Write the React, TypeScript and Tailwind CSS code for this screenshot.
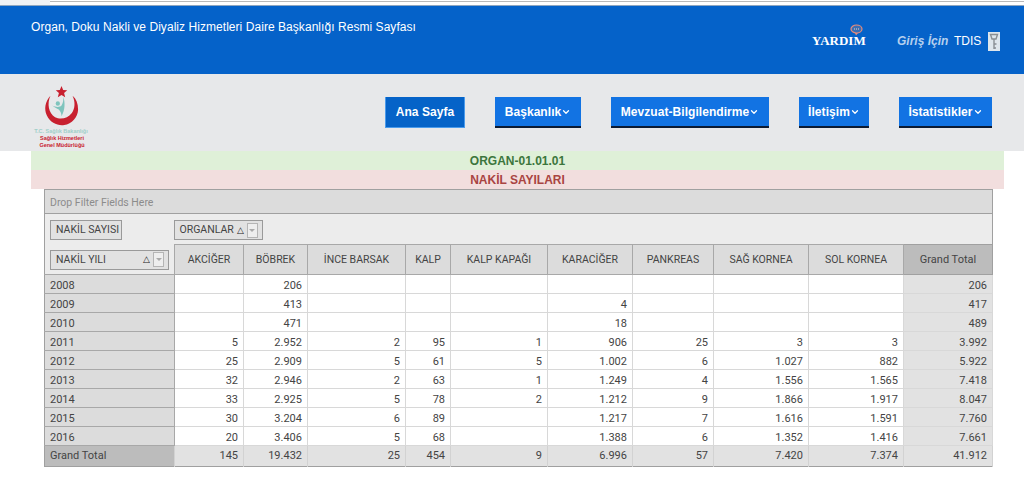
import { ChevronDown } from 'lucide-react';

const columns = [
  { name: 'AKCİĞER', width: 'w-[69px]' },
  { name: 'BÖBREK', width: 'w-[64px]' },
  { name: 'İNCE BARSAK', width: 'w-[98px]' },
  { name: 'KALP', width: 'w-[45px]' },
  { name: 'KALP KAPAĞI', width: 'w-[97px]' },
  { name: 'KARACİĞER', width: 'w-[85px]' },
  { name: 'PANKREAS', width: 'w-[81px]' },
  { name: 'SAĞ KORNEA', width: 'w-[95px]' },
  { name: 'SOL KORNEA', width: 'w-[95px]' },
];

const rows = [
  ['2008', '', '206', '', '', '', '', '', '', '', '206'],
  ['2009', '', '413', '', '', '', '4', '', '', '', '417'],
  ['2010', '', '471', '', '', '', '18', '', '', '', '489'],
  ['2011', '5', '2.952', '2', '95', '1', '906', '25', '3', '3', '3.992'],
  ['2012', '25', '2.909', '5', '61', '5', '1.002', '6', '1.027', '882', '5.922'],
  ['2013', '32', '2.946', '2', '63', '1', '1.249', '4', '1.556', '1.565', '7.418'],
  ['2014', '33', '2.925', '5', '78', '2', '1.212', '9', '1.866', '1.917', '8.047'],
  ['2015', '30', '3.204', '6', '89', '', '1.217', '7', '1.616', '1.591', '7.760'],
  ['2016', '20', '3.406', '5', '68', '', '1.388', '6', '1.352', '1.416', '7.661'],
];

const totals = ['145', '19.432', '25', '454', '9', '6.996', '57', '7.420', '7.374', '41.912'];

function NavButton({ label, width, active, menu }: { label: string; width: string; active?: boolean; menu?: boolean }) {
  return (
    <button
      className={`h-[31px] flex items-center justify-center text-white text-[12px] tracking-[0.06px] font-bold ${width} ${
        active
          ? 'bg-[#0563c8] border border-t-0 border-[#4a9bec]'
          : 'bg-[#1273e3] border-b-2 border-[#0b1a33]'
      }`}
    >
      {label}
      {menu && <ChevronDown size={10} strokeWidth={3} />}
    </button>
  );
}

function FieldButton({ label, arrow, wide }: { label: string; arrow?: boolean; wide?: boolean }) {
  return (
    <div
      className={`h-[20px] inline-flex items-center border border-[#9a9a9a] bg-[#e2e2e2] pl-[5px] text-[#444] text-[10.5px] ${
        arrow ? 'pr-[4px]' : 'pr-[2px]'
      } ${wide ? 'w-[119px] justify-between' : 'gap-[3px]'}`}
    >
      <span>{label}</span>
      {arrow && (
        <span className="flex items-center gap-[3px]">
          <span className="text-[9px] leading-none text-[#222]">△</span>
          <span className="w-[11px] h-[15px] border border-[#b5b5b5] bg-[#eeeeee] flex items-center justify-center">
            <span className="w-0 h-0 border-x-[3px] border-x-transparent border-t-[3px] border-t-[#aaaaaa]" />
          </span>
        </span>
      )}
    </div>
  );
}

export default function App() {
  return (
    <div className="w-[1024px] h-[490px] overflow-hidden bg-white font-['Liberation_Sans',sans-serif]">
      <div className="h-[6px] flex bg-white border-b border-[#8fa6bf]">
        <div className="w-[50px] bg-[#f0f2f5]" />
        <div className="flex-1 h-[2px] border-b border-[#b9b9b9]" />
      </div>

      {/* Blue header */}
      <div className="h-[68px] bg-[#0562c9] flex justify-between pl-[31px] pr-[24px] text-white">
        <div className="pt-[13px] text-[12px] leading-[16px] tracking-[0.05px]">
          Organ, Doku Nakli ve Diyaliz Hizmetleri Daire Başkanlığı Resmi Sayfası
        </div>
        <div className="flex items-start pt-[18px]">
          <div className="relative w-[53px] mr-[32px] pt-[10px]">
            <svg className="absolute left-[38px] top-[0px]" width="13" height="12" viewBox="0 0 13 12" fill="none">
              <ellipse cx="6.5" cy="5" rx="5.5" ry="4" fill="#3a6fb5" stroke="#e98c7c" strokeWidth="1.2" />
              <path d="M5 9l1 2.5L8 9" fill="#e98c7c" />
              <path d="M4 5h5" stroke="#f3d6c6" strokeWidth="1.2" strokeDasharray="1 1" />
            </svg>
            <div className="text-[13px] leading-[14px] font-bold font-['Liberation_Serif',serif] whitespace-nowrap">YARDIM</div>
          </div>
          <div className="pt-[9px] text-[12px] leading-[16px] italic font-bold text-[#b5d0ee] w-[57px] whitespace-nowrap">Giriş İçin</div>
          <div className="pt-[9px] text-[12px] leading-[16px] w-[34px]">TDIS</div>
          <div className="mt-[8px] w-[12px] h-[19px] bg-[#dfe6ec] flex items-center justify-center">
            <svg width="10" height="18" viewBox="0 0 10 18" fill="none" stroke="#8a8f94" strokeWidth="1.4">
              <path d="M1.5 1.5L8.5 1.5L7 6L3 6Z" />
              <path d="M5 6V16M5 11h2.5M5 15h2" />
            </svg>
          </div>
        </div>
      </div>

      {/* Logo and navigation */}
      <div className="h-[77px] bg-[#e7e8ea] flex pl-[34px] pr-[32px] justify-between">
        <div className="w-[54px] flex flex-col items-center pt-[12px] shrink-0">
          <svg width="35" height="41" viewBox="0 0 38 42" preserveAspectRatio="none">
            <polygon
              fill="#c8202f"
              points="19,0 20.8,4.2 25.2,4.4 21.8,7.2 23,11.6 19,9.2 15,11.6 16.2,7.2 12.8,4.4 17.2,4.2"
            />
            <path
              d="M7 10C1 16 0 24 3 30C7 38 15 41 22 40C30 39 37 32 37 24C37 18 35 13 31 10C34 16 34 23 30 28C26 33 18 35 12 32C5 28 3 18 7 10Z"
              fill="#c8202f"
            />
            <circle cx="15" cy="18" r="2.3" fill="#7fc4bd" />
            <path d="M9 20C13 22 17 22 19 20C21 17 21 14 21 11C23 17 23 24 19 31C19 28 18 26 16 24C14 23 11 22 9 20Z" fill="#7fc4bd" />
          </svg>
          <div className="w-[70px] text-center text-[5.5px] leading-[7px] font-bold whitespace-nowrap mt-[1px]">
            <div className="text-[#9fcfc9]">T.C. Sağlık Bakanlığı</div>
            <div className="text-[#c8202f] pl-[2px]">Sağlık Hizmetleri</div>
            <div className="text-[#c8202f] pl-[2px]">Genel Müdürlüğü</div>
          </div>
        </div>
        <div className="flex gap-[30px] pt-[23px] items-start">
          <NavButton label="Ana Sayfa" width="w-[80px]" active />
          <NavButton label="Başkanlık" width="w-[86px]" menu />
          <NavButton label="Mevzuat-Bilgilendirme" width="w-[158px]" menu />
          <NavButton label="İletişim" width="w-[70px]" menu />
          <NavButton label="İstatistikler" width="w-[93px]" menu />
        </div>
      </div>

      {/* Titles */}
      <div className="mx-[31px] w-[973px] h-[19px] bg-[#dff0d8] text-[#3c763d] text-[12px] leading-[21px] font-bold text-center">
        ORGAN-01.01.01
      </div>
      <div className="mx-[31px] w-[973px] h-[19px] bg-[#f2dede] text-[#a94442] text-[12px] leading-[21px] font-bold text-center">
        NAKİL SAYILARI
      </div>

      {/* Pivot grid */}
      <table className="ml-[44px] w-[949px] table-fixed border-collapse border border-[#a0a0a0] text-[11px] text-[#444] font-['Roboto',sans-serif]">
        <colgroup>
          <col className="w-[130px]" />
          {columns.map((c) => (
            <col key={c.name} className={c.width} />
          ))}
          <col />
        </colgroup>
        <tbody>
          <tr className="h-[24px] bg-[#dcdcdc] border-b border-[#a0a0a0]">
            <td colSpan={11} className="px-[5px] pt-[2px] text-[10.5px] text-[#8c8c8c]">Drop Filter Fields Here</td>
          </tr>
          <tr className="h-[31px] bg-[#ececec]">
            <td className="px-[5px] pt-[2px]">
              <FieldButton label="NAKİL SAYISI" />
            </td>
            <td colSpan={10} className="pt-[2px] pl-0 -translate-x-px">
              <FieldButton label="ORGANLAR" arrow />
            </td>
          </tr>
          <tr className="h-[30px]">
            <td className="bg-[#ececec] px-[5px] pt-[1px]">
              <FieldButton label="NAKİL YILI" arrow wide />
            </td>
            {columns.map((c) => (
              <td key={c.name} className="bg-[#dcdcdc] border border-[#a8a8a8] text-center text-[10.5px] whitespace-nowrap">
                {c.name}
              </td>
            ))}
            <td className="bg-[#bcbcbc] border border-[#a0a0a0] pt-[2px] text-center">Grand Total</td>
          </tr>
          {rows.map((row) => (
            <tr key={row[0]} className="h-[19px]">
              {row.map((cell, i) => {
                if (i === 0) {
                  return (
                    <td key={i} className="bg-[#dcdcdc] border border-[#a8a8a8] border-l-0 px-[5px] pt-[2px] leading-[15px]">
                      {cell}
                    </td>
                  );
                }
                return (
                  <td
                    key={i}
                    className={`border border-[#d8d8d8] px-[5px] pt-[2px] leading-[15px] text-right ${i === 10 ? 'bg-[#e2e2e2]' : 'bg-white'}`}
                  >
                    {cell}
                  </td>
                );
              })}
            </tr>
          ))}
          <tr className="h-[21px] bg-[#e2e2e2]">
            <td className="bg-[#bcbcbc] px-[5px]">Grand Total</td>
            {totals.map((t, i) => (
              <td key={i} className="border-x border-[#d2d2d2] px-[5px] text-right">
                {t}
              </td>
            ))}
          </tr>
        </tbody>
      </table>
    </div>
  );
}
